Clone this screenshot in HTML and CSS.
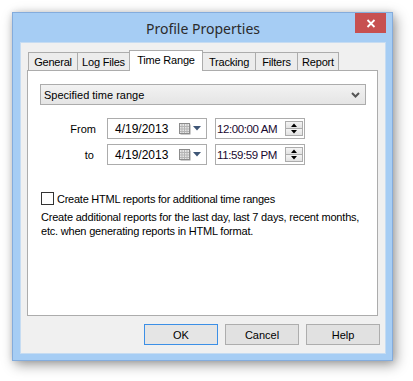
FILE: index.html
```html
<!DOCTYPE html>
<html>
<head>
<meta charset="utf-8">
<link rel="stylesheet" href="styles.css">
</head>
<body>
<div class="window">
  <div class="titlebar">
    <span class="spacer"></span>
    <div class="title">Profile Properties</div>
    <div class="closecell">
      <div class="close">
        <svg width="10" height="9" viewBox="0 0 10 9"><path d="M1.5 1 L8.5 8 M8.5 1 L1.5 8" stroke="#fff" stroke-width="1.8" fill="none"/></svg>
      </div>
    </div>
  </div>
  <div class="client">
    <div class="tabs">
      <div class="tab w-general">General</div>
      <div class="tab w-log">Log Files</div>
      <div class="tab tab-sel w-time">Time Range</div>
      <div class="tab w-track">Tracking</div>
      <div class="tab w-filt">Filters</div>
      <div class="tab w-rep">Report</div>
    </div>
    <div class="panel">
      <div class="select">
        <span>Specified time range</span>
        <svg width="9" height="6" viewBox="0 0 9 6"><path d="M1 1 L4.5 4.5 L8 1" stroke="#555" stroke-width="2" fill="none"/></svg>
      </div>
      <div class="range">
        <div class="lbl">From</div>
        <div class="date">
          <span class="val">4/19/2013</span>
          <span class="picker">
            <svg class="cal" width="12" height="12" viewBox="0 0 12 12">
              <rect x="1.5" y="1.5" width="10" height="10" fill="#9a9a9a"/>
              <rect x="0.5" y="0.5" width="10" height="10" fill="#e6e6e6" stroke="#8c8c8c"/>
              <path d="M3 1 V10 M5.5 1 V10 M8 1 V10 M1 3.5 H10 M1 6 H10 M1 8.5 H10" stroke="#b5b5b5" stroke-width="1"/>
            </svg>
            <svg width="8" height="5" viewBox="0 0 8 5"><path d="M0 0 H8 L4 4.5 Z" fill="#3f5676"/></svg>
          </span>
        </div>
        <div class="time">
          <span class="val tval">12:00:00 AM</span>
          <span class="spin">
            <span class="sbtn"><svg width="6" height="4" viewBox="0 0 6 4"><path d="M0 4 H6 L3 0.5 Z" fill="#000"/></svg></span>
            <span class="sbtn"><svg width="6" height="4" viewBox="0 0 6 4"><path d="M0 0 H6 L3 3.5 Z" fill="#000"/></svg></span>
          </span>
        </div>
        <div class="lbl lbl-to">to</div>
        <div class="date">
          <span class="val">4/19/2013</span>
          <span class="picker">
            <svg class="cal" width="12" height="12" viewBox="0 0 12 12">
              <rect x="1.5" y="1.5" width="10" height="10" fill="#9a9a9a"/>
              <rect x="0.5" y="0.5" width="10" height="10" fill="#e6e6e6" stroke="#8c8c8c"/>
              <path d="M3 1 V10 M5.5 1 V10 M8 1 V10 M1 3.5 H10 M1 6 H10 M1 8.5 H10" stroke="#b5b5b5" stroke-width="1"/>
            </svg>
            <svg width="8" height="5" viewBox="0 0 8 5"><path d="M0 0 H8 L4 4.5 Z" fill="#3f5676"/></svg>
          </span>
        </div>
        <div class="time">
          <span class="val tval">11:59:59 PM</span>
          <span class="spin">
            <span class="sbtn"><svg width="6" height="4" viewBox="0 0 6 4"><path d="M0 4 H6 L3 0.5 Z" fill="#000"/></svg></span>
            <span class="sbtn"><svg width="6" height="4" viewBox="0 0 6 4"><path d="M0 0 H6 L3 3.5 Z" fill="#000"/></svg></span>
          </span>
        </div>
      </div>
      <div class="check"><span class="box"></span><span>Create HTML reports for additional time ranges</span></div>
      <p class="desc">Create additional reports for the last day, last 7 days, recent months,<br>etc. when generating reports in HTML format.</p>
    </div>
    <div class="buttons">
      <div class="btn btn-default">OK</div>
      <div class="btn">Cancel</div>
      <div class="btn">Help</div>
    </div>
  </div>
</div>
</body>
</html>
```

FILE: styles.css
```css
* { box-sizing: border-box; }
html, body { margin: 0; padding: 0; background: #ffffff; }
body {
  width: 413px;
  height: 381px;
  overflow: hidden;
  font-family: "Liberation Sans", Arial, sans-serif;
  font-size: 11px;
  color: #000;
}
.window {
  width: 381px;
  height: 349px;
  margin: 12px 0 0 12px;
  border: 1px solid #84acdc;
  background: #a6cdf4;
  padding: 0 6px 6px 7px;
  display: flex;
  flex-direction: column;
  box-shadow: 3px 4px 12px rgba(0,0,0,0.38), 0 0 6px rgba(0,0,0,0.12);
}
.titlebar {
  height: 29px;
  display: grid;
  grid-template-columns: 1fr auto 1fr;
  align-items: start;
}
.title {
  font-family: "Noto Sans", "Open Sans", sans-serif;
  font-size: 14px;
  color: #2b2b2b;
  line-height: 20px;
  padding-top: 6px;
  white-space: nowrap;
}
.closecell { display: flex; justify-content: flex-end; }
.close {
  width: 31px;
  height: 20px;
  background: #c75050;
  display: flex;
  align-items: center;
  justify-content: center;
}
.client {
  flex: 1;
  background: #f0f0f0;
  border: 1px solid #c6dcf2;
  padding: 7px 6px 0 6px;
  display: flex;
  flex-direction: column;
}
.tabs {
  height: 20px;
  display: flex;
  align-items: flex-end;
  padding-left: 1px;
}
.tab {
  height: 18px;
  border: 1px solid #acacac;
  border-bottom: none;
  background: #ececec;
  margin-right: -1px;
  display: flex;
  align-items: center;
  justify-content: center;
  padding-top: 1px;
  white-space: nowrap;
  letter-spacing: -0.2px;
}
.tab-sel {
  height: 21px;
  margin-bottom: -1px;
  background: #ffffff;
  position: relative;
  z-index: 1;
  padding-top: 0;
  padding-bottom: 2px;
}
.w-general { width: 50px; }
.w-log { width: 53px; }
.w-time { width: 74px; }
.w-track { width: 54px; }
.w-filt { width: 43px; }
.w-rep { width: 42px; }
.panel {
  width: 351px;
  height: 246px;
  background: #ffffff;
  border: 1px solid #acacac;
  padding: 13px 0 0 12px;
}
.select {
  width: 326px;
  height: 21px;
  border: 1px solid #acacac;
  background: linear-gradient(#f2f2f2, #e5e5e5);
  display: flex;
  align-items: center;
  justify-content: space-between;
  padding: 0 5px 0 3px;
}
.range {
  margin-top: 13px;
  display: grid;
  grid-template-columns: 56px 100px 87px;
  column-gap: 11px;
  row-gap: 5px;
  align-items: center;
}
.range .time { margin-left: -3px; }
.lbl {
  text-align: right;
  font-size: 11px;
}
.lbl-to { padding-right: 2px; }
.date, .time {
  height: 21px;
  border: 1px solid #acacac;
  background: #fff;
  display: flex;
  align-items: center;
  justify-content: space-between;
}
.val { font-size: 12px; padding-left: 7px; }
.tval { padding-left: 1px; color: #1a0a30; font-size: 11.5px; letter-spacing: -0.4px; }
.picker {
  display: flex;
  align-items: center;
  gap: 2px;
  padding-right: 5px;
}
.cal { margin-top: 1px; }
.spin {
  display: flex;
  flex-direction: column;
  margin-right: 1px;
}
.sbtn {
  width: 18px;
  height: 8px;
  border: 1px solid #acacac;
  background: linear-gradient(#f4f4f4, #e2e2e2);
  display: flex;
  align-items: center;
  justify-content: center;
}
.sbtn + .sbtn { margin-top: -1px; }
.check {
  margin-top: 26px;
  margin-left: 1px;
  height: 15px;
  display: flex;
  align-items: center;
  gap: 3px;
  white-space: nowrap;
  letter-spacing: -0.25px;
}
.box {
  width: 13px;
  height: 13px;
  border: 1px solid #333;
  background: #fff;
}
.desc {
  margin: 4px 0 0 1px;
  line-height: 14px;
  white-space: nowrap;
  letter-spacing: -0.2px;
}
.buttons {
  margin-top: 8px;
  display: flex;
  justify-content: flex-end;
  gap: 7px;
  margin-right: -1px;
}
.btn {
  width: 74px;
  height: 21px;
  border: 1px solid #adadad;
  background: #e1e1e1;
  display: flex;
  align-items: center;
  justify-content: center;
  font-size: 11px;
}
.btn-default {
  border-color: #3c8fe6;
  background: #e5e5e5;
}
```
